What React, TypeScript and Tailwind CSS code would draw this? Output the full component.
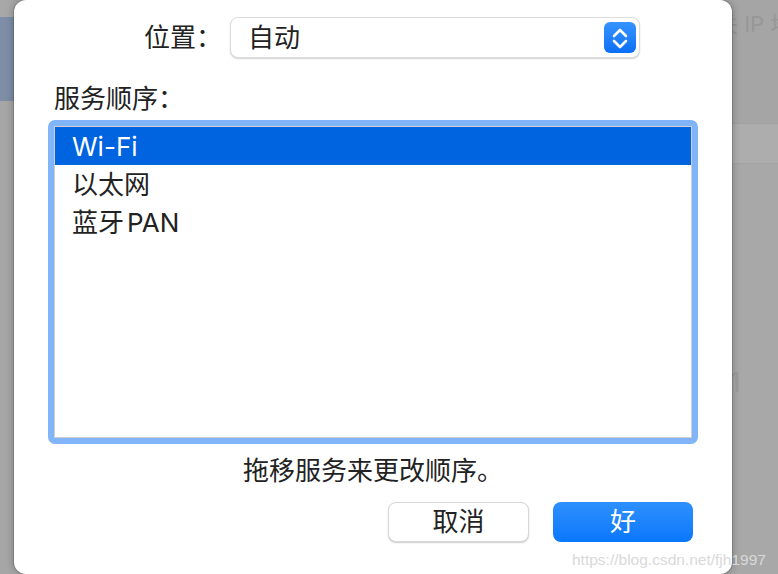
import React from 'react';

const FONT = "font-['Inter','Noto_Sans_CJK_SC',sans-serif]";

function Stepper() {
  return (
    <div className="w-[32px] h-[31px] rounded-[6px] bg-gradient-to-b from-[#3594ff] to-[#0a6ff5] flex items-center justify-center">
      <svg width="32" height="31" viewBox="0 0 32 31" fill="none">
        <polyline points="10,14 16,8 22,14" stroke="white" strokeWidth="2.6" strokeLinecap="round" strokeLinejoin="round" />
        <polyline points="10,19 16,25 22,19" stroke="white" strokeWidth="2.6" strokeLinecap="round" strokeLinejoin="round" />
      </svg>
    </div>
  );
}

export default function App() {
  const services = [
    { id: 'wifi', label: <>Wi-Fi</> },
    { id: 'eth', label: <>以太网</> },
    { id: 'bt', label: <>蓝牙<span className="ml-[3px]">PAN</span></> },
  ];
  const selected = 0;

  return (
    <div className={`relative w-[778px] h-[574px] overflow-hidden flex bg-[#a7a7a7] ${FONT}`}>
      {/* left backdrop */}
      <div className="w-[14px] flex flex-col">
        <div className="h-[17px] bg-[#a8a8a8]"></div>
        <div className="h-[84px] bg-[#7e8ea6]"></div>
        <div className="flex-1 bg-[#a6a6a6]"></div>
      </div>

      {/* sheet */}
      <div className="relative z-10 w-[718px] h-[574px] bg-white rounded-[12px] shadow-[0_0_0_1px_rgba(0,0,0,0.12),0_0_8px_rgba(0,0,0,0.3)] px-[34px] pt-[17px] flex flex-col">
        <div className="flex items-center h-[41px]">
          <span className="ml-[96px] text-[26px] leading-[32px] text-[#222]">位置：</span>
          <div className="ml-[8px] w-[410px] h-[41px] rounded-[8px] bg-white border border-[#dcdcdc] shadow-[0_1px_1.5px_rgba(0,0,0,0.18)] flex items-center justify-between pl-[17px] pr-[3px]">
            <span className="text-[26px] leading-[32px] text-[#222]">自动</span>
            <Stepper />
          </div>
        </div>

        <div className="mt-[25px] ml-[6px] text-[26px] leading-[32px] text-[#222]">服务顺序：</div>

        <div className="mt-[5px] h-[324px] rounded-[7px] bg-[#81b4f8] p-[6px]">
          <div className="h-full bg-white border border-[#cfcfcf] flex flex-col">
            {services.map((s, i) => (
              <div
                key={s.id}
                className={`h-[38px] flex items-center pl-[17px] pt-[1px] text-[26px] leading-[32px] ${
                  i === selected ? 'bg-[#0064e1] text-white' : 'text-[#222]'
                }`}
              >
                {s.label}
              </div>
            ))}
          </div>
        </div>

        <div className="mt-[11px] text-center text-[26px] leading-[32px] text-[#222]">拖移服务来更改顺序。</div>

        <div className="mt-[15px] flex justify-end gap-[24px] pr-[5px]">
          <button className="w-[141px] h-[40px] rounded-[8px] bg-white border border-[#d6d6d6] shadow-[0_1px_1.5px_rgba(0,0,0,0.2)] text-[26px] leading-[32px] text-[#222]">
            取消
          </button>
          <button className="w-[140px] h-[40px] rounded-[8px] bg-gradient-to-b from-[#2d90fd] to-[#0877fb] text-[26px] leading-[32px] text-white">
            好
          </button>
        </div>
      </div>

      {/* right backdrop */}
      <div className="flex-1 flex flex-col overflow-hidden">
        <div className="h-[123px] bg-[#a5a5a5] pt-[8px]">
          <div className="-ml-[16px] whitespace-nowrap text-[22px] leading-[32px] text-[#979797]">关 IP 地址</div>
        </div>
        <div className="h-[40px] bg-[#adadad] border-t border-[#a0a0a0]"></div>
        <div className="flex-1 bg-[#a8a8a8] border-t border-[#a2a2a2] pt-[203px]">
          <div className="-ml-[24px] whitespace-nowrap text-[27px] leading-[32px] text-[#9c9c9c]">0.1</div>
        </div>
      </div>

      {/* watermark */}
      <div className="absolute z-20 left-[572px] top-[551px] whitespace-nowrap font-['Liberation_Sans',sans-serif] text-[15.5px] leading-[18px] text-[#d9d9d9]">
        https://blog.csdn.net/fjh1997
      </div>
    </div>
  );
}
